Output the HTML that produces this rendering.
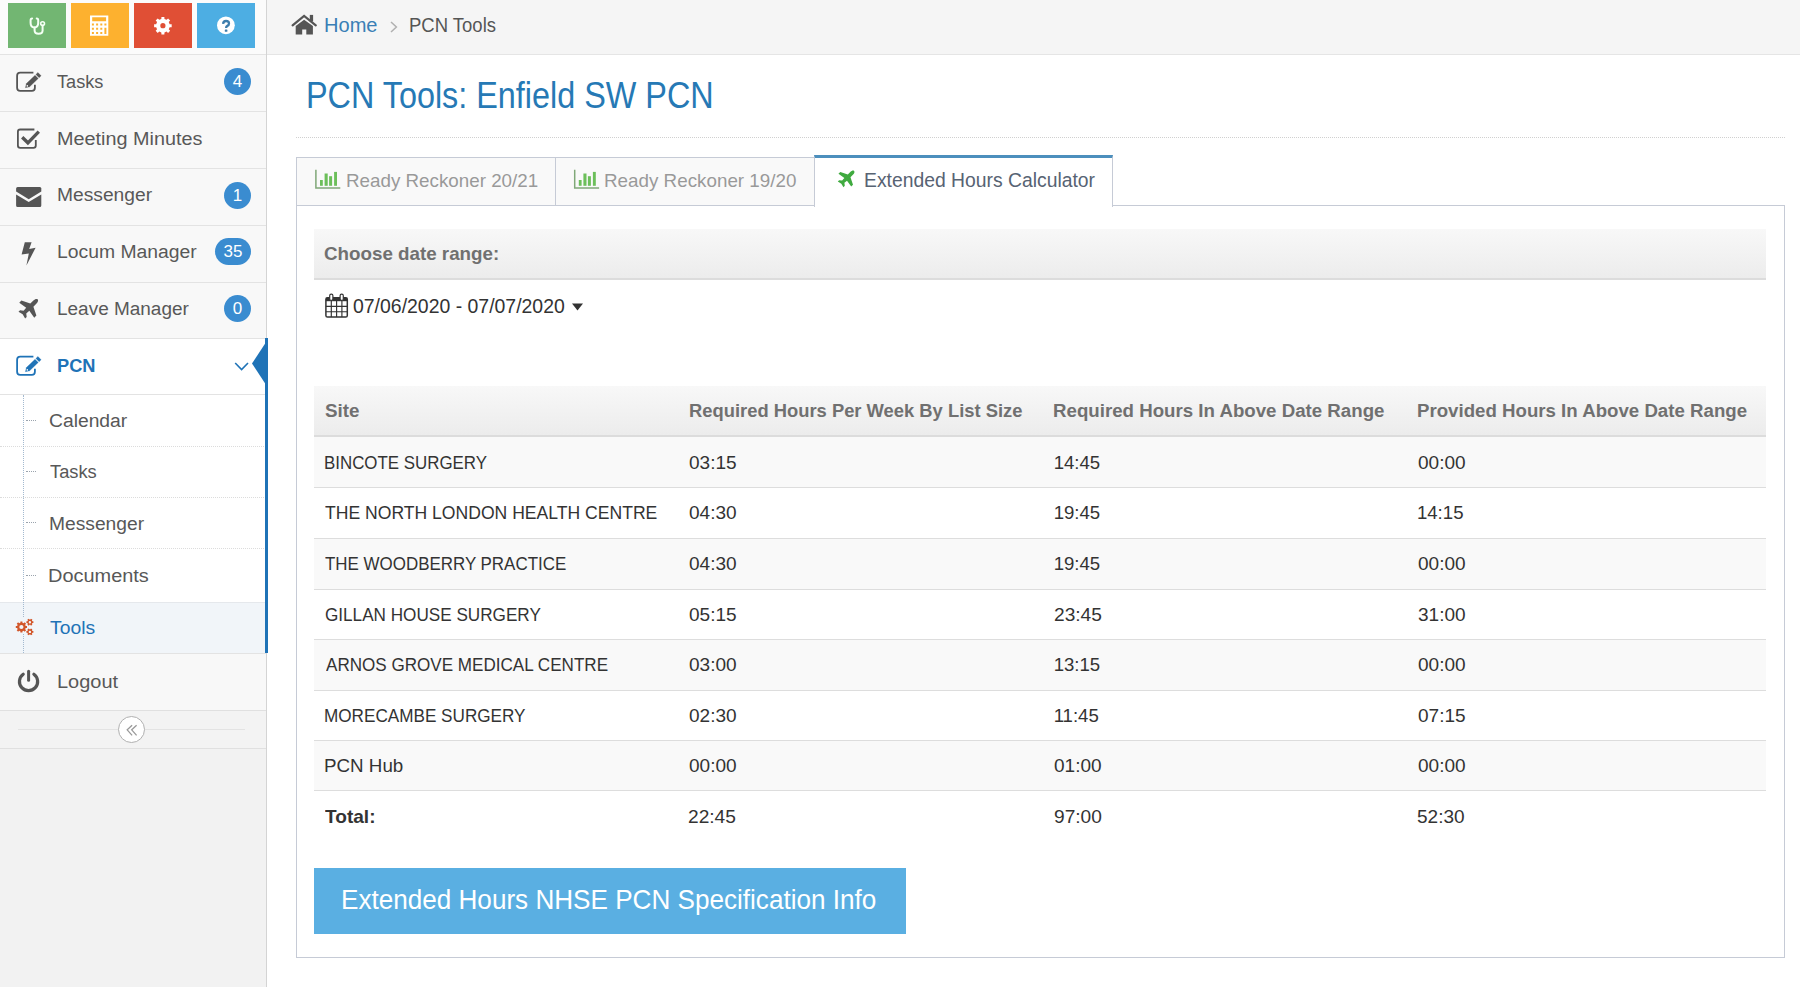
<!DOCTYPE html><html><head><meta charset='utf-8'><style>
*{box-sizing:border-box;margin:0;padding:0}
html,body{width:1800px;height:987px;overflow:hidden;background:#fff;font-family:"Liberation Sans",sans-serif;color:#393939}
.a{position:absolute;white-space:nowrap}
.t{position:absolute;white-space:nowrap;line-height:40px;transform-origin:0 50%}
svg{position:absolute;overflow:visible}
</style></head><body>
<div class='a' style='left:0;top:0;width:266px;height:987px;background:#f2f2f2'></div>
<div class='a' style='left:266px;top:0;width:1px;height:987px;background:#d4d4d4'></div>
<div class='a' style='left:0;top:0;width:266px;height:54px;background:#fbfbfb'></div>
<div class='a' style='left:8px;top:3px;width:58px;height:45px;background:#72b672'></div>
<div class='a' style='left:71px;top:3px;width:58px;height:45px;background:#fdb12f'></div>
<div class='a' style='left:134px;top:3px;width:58px;height:45px;background:#e04f35'></div>
<div class='a' style='left:197px;top:3px;width:58px;height:45px;background:#4daee3'></div>
<div class='a' style='left:0;top:54px;width:266px;height:57px;background:#f8f8f8;border-top:1px solid #e3e3e3'></div>
<div class='t' id='t0' style='left:57.30px;top:62.09px;font-size:18.8px;color:#585858;font-weight:400;letter-spacing:0px;transform:scaleX(0.9649);'>Tasks</div>
<div class='a' style='left:224px;top:67.5px;width:27px;height:27px;border-radius:14px;background:#3a8cd0;color:#fff;font-size:17px;line-height:27px;text-align:center'>4</div>
<div class='a' style='left:0;top:111px;width:266px;height:57px;background:#f8f8f8;border-top:1px solid #e3e3e3'></div>
<div class='t' id='t1' style='left:56.55px;top:118.59px;font-size:18.8px;color:#585858;font-weight:400;letter-spacing:0px;transform:scaleX(1.0550);'>Meeting Minutes</div>
<div class='a' style='left:0;top:168px;width:266px;height:57px;background:#f8f8f8;border-top:1px solid #e3e3e3'></div>
<div class='t' id='t2' style='left:57.05px;top:175.39px;font-size:18.8px;color:#585858;font-weight:400;letter-spacing:0px;transform:scaleX(1.0236);'>Messenger</div>
<div class='a' style='left:224px;top:181.5px;width:27px;height:27px;border-radius:14px;background:#3a8cd0;color:#fff;font-size:17px;line-height:27px;text-align:center'>1</div>
<div class='a' style='left:0;top:225px;width:266px;height:56.5px;background:#f8f8f8;border-top:1px solid #e3e3e3'></div>
<div class='t' id='t3' style='left:57.05px;top:232.19px;font-size:18.8px;color:#585858;font-weight:400;letter-spacing:0px;transform:scaleX(1.0295);'>Locum Manager</div>
<div class='a' style='left:215px;top:238.2px;width:36px;height:27px;border-radius:14px;background:#3a8cd0;color:#fff;font-size:17px;line-height:27px;text-align:center'>35</div>
<div class='a' style='left:0;top:281.5px;width:266px;height:56.5px;background:#f8f8f8;border-top:1px solid #e3e3e3'></div>
<div class='t' id='t4' style='left:57.05px;top:288.99px;font-size:18.8px;color:#585858;font-weight:400;letter-spacing:0px;transform:scaleX(1.0101);'>Leave Manager</div>
<div class='a' style='left:224px;top:294.8px;width:27px;height:27px;border-radius:14px;background:#3a8cd0;color:#fff;font-size:17px;line-height:27px;text-align:center'>0</div>
<div class='a' style='left:0;top:338px;width:266px;height:57px;background:#fff;border-top:1px solid #e3e3e3'></div>
<div class='t' id='t5' style='left:57.20px;top:345.56px;font-size:18.6px;color:#1f73b7;font-weight:700;letter-spacing:0px;transform:scaleX(0.9810);'>PCN</div>
<div class='a' style='left:0;top:394px;width:266px;height:208px;background:#fff;border-top:1px solid #e3e3e3'></div>
<div class='t' id='t6' style='left:49.40px;top:401.19px;font-size:18.8px;color:#585858;font-weight:400;letter-spacing:0px;transform:scaleX(1.0260);'>Calendar</div>
<div class='a' style='left:26px;top:420px;width:10px;height:0;border-top:1px dotted #9aa3ad'></div>
<div class='a' style='left:0;top:446px;width:266px;height:0;border-top:1px dotted #dcdcdc'></div>
<div class='t' id='t7' style='left:49.90px;top:452.49px;font-size:18.8px;color:#585858;font-weight:400;letter-spacing:0px;transform:scaleX(0.9734);'>Tasks</div>
<div class='a' style='left:26px;top:471px;width:10px;height:0;border-top:1px dotted #9aa3ad'></div>
<div class='a' style='left:0;top:497px;width:266px;height:0;border-top:1px dotted #dcdcdc'></div>
<div class='t' id='t8' style='left:48.65px;top:503.79px;font-size:18.8px;color:#585858;font-weight:400;letter-spacing:0px;transform:scaleX(1.0236);'>Messenger</div>
<div class='a' style='left:26px;top:522px;width:10px;height:0;border-top:1px dotted #9aa3ad'></div>
<div class='a' style='left:0;top:548px;width:266px;height:0;border-top:1px dotted #dcdcdc'></div>
<div class='t' id='t9' style='left:48.15px;top:556.19px;font-size:18.8px;color:#585858;font-weight:400;letter-spacing:0px;transform:scaleX(1.0615);'>Documents</div>
<div class='a' style='left:26px;top:575px;width:10px;height:0;border-top:1px dotted #9aa3ad'></div>
<div class='a' style='left:0;top:601.5px;width:266px;height:52px;background:#f1f5f9;border-top:1px solid #e5e8ec'></div>
<div class='t' id='t10' style='left:49.50px;top:608.19px;font-size:18.8px;color:#1f73b7;font-weight:400;letter-spacing:0px;transform:scaleX(1.0292);'>Tools</div>
<div class='a' style='left:23px;top:395px;width:0;height:258px;border-left:1px dotted #a3b9cf'></div>
<div class='a' style='left:265px;top:338px;width:3px;height:315px;background:#1f73b7'></div>
<div class='a' style='left:0;top:653px;width:266px;height:57px;background:#f8f8f8;border-top:1px solid #e3e3e3'></div>
<div class='t' id='t11' style='left:56.60px;top:662.19px;font-size:18.8px;color:#585858;font-weight:400;letter-spacing:0px;transform:scaleX(1.0637);'>Logout</div>
<div class='a' style='left:0;top:710px;width:266px;height:39px;background:#f3f3f3;border-top:1px solid #e0e0e0;border-bottom:1px solid #e0e0e0'></div>
<div class='a' style='left:18px;top:729px;width:227px;height:1px;background:#e3e3e3'></div>
<div class='a' style='left:117.5px;top:715.8px;width:27.6px;height:27.6px;border-radius:50%;background:#fff;border:1.4px solid #b0b0b0'></div>
<div class='a' style='left:267px;top:0;width:1533px;height:55px;background:#f5f5f5;border-bottom:1px solid #e5e5e5'></div>
<div class='t' id='t12' style='left:324.20px;top:6.11px;font-size:19.3px;color:#3a7fb6;font-weight:400;letter-spacing:0px;transform:scaleX(1.0400);'>Home</div>
<div class='t' id='t13' style='left:408.50px;top:6.11px;font-size:19.3px;color:#555;font-weight:400;letter-spacing:0px;transform:scaleX(0.9588);'>PCN Tools</div>
<div class='t' id='t14' style='left:305.95px;top:75.58px;font-size:37px;color:#2679b5;font-weight:400;letter-spacing:0px;transform:scaleX(0.8747);'>PCN Tools: Enfield SW PCN</div>
<div class='a' style='left:296px;top:137px;width:1489px;height:0;border-top:1px dotted #d0d0d0'></div>
<div class='a' style='left:296px;top:157px;width:260px;height:49px;background:#f9f9f9;border:1px solid #c6cbd6;border-bottom:none'></div>
<div class='a' style='left:555px;top:157px;width:260px;height:49px;background:#f9f9f9;border:1px solid #c6cbd6;border-bottom:none'></div>
<div class='t' id='t15' style='left:345.55px;top:160.92px;font-size:19px;color:#999;font-weight:400;letter-spacing:0px;transform:scaleX(0.9888);'>Ready Reckoner 20/21</div>
<div class='t' id='t16' style='left:604.45px;top:160.92px;font-size:19px;color:#999;font-weight:400;letter-spacing:0px;transform:scaleX(0.9901);'>Ready Reckoner 19/20</div>
<div class='a' style='left:296px;top:205px;width:1489px;height:753px;background:#fff;border:1px solid #c6cbd6'></div>
<div class='a' style='left:814px;top:155px;width:299px;height:52px;background:#fff;border:1px solid #c6cbd6;border-top:3px solid #4c8fbd;border-bottom:none'></div>
<div class='t' id='t17' style='left:863.50px;top:161.11px;font-size:19.3px;color:#576373;font-weight:400;letter-spacing:0px;transform:scaleX(1.0026);'>Extended Hours Calculator</div>
<div class='a' style='left:314px;top:229px;width:1452px;height:51px;background:linear-gradient(#f8f8f8,#ececec);border-bottom:2px solid #dcdcdc'></div>
<div class='t' id='t18' style='left:324.25px;top:233.72px;font-size:19px;color:#707070;font-weight:700;letter-spacing:0px;transform:scaleX(0.9880);'>Choose date range:</div>
<div class='t' id='t19' style='left:352.70px;top:286.51px;font-size:19.3px;color:#333;font-weight:400;letter-spacing:0px;transform:scaleX(1.0079);'>07/06/2020 - 07/07/2020</div>
<div class='a' style='left:314px;top:386px;width:1452px;height:51px;background:linear-gradient(#f8f8f8,#ececec);border-bottom:2px solid #dcdcdc'></div>
<div class='t' id='t20' style='left:325.00px;top:390.69px;font-size:18.8px;color:#707070;font-weight:700;letter-spacing:0px;'>Site</div>
<div class='t' id='t21' style='left:688.70px;top:390.69px;font-size:18.8px;color:#707070;font-weight:700;letter-spacing:0px;transform:scaleX(0.9780);'>Required Hours Per Week By List Size</div>
<div class='t' id='t22' style='left:1053.40px;top:390.69px;font-size:18.8px;color:#707070;font-weight:700;letter-spacing:0px;transform:scaleX(0.9946);'>Required Hours In Above Date Range</div>
<div class='t' id='t23' style='left:1417.20px;top:390.69px;font-size:18.8px;color:#707070;font-weight:700;letter-spacing:0px;transform:scaleX(0.9935);'>Provided Hours In Above Date Range</div>
<div class='a' style='left:314px;top:437.0px;width:1452px;height:51.0px;background:#f9f9f9;border-bottom:1px solid #ddd'></div>
<div class='t' id='t24' style='left:324.00px;top:442.76px;font-size:18.6px;color:#333;font-weight:400;letter-spacing:0px;transform:scaleX(0.9083);'>BINCOTE SURGERY</div>
<div class='t' id='t25' style='left:689.20px;top:442.76px;font-size:18.6px;color:#333;font-weight:400;letter-spacing:0px;transform:scaleX(1.0233);'>03:15</div>
<div class='t' id='t26' style='left:1053.65px;top:442.76px;font-size:18.6px;color:#333;font-weight:400;letter-spacing:0px;'>14:45</div>
<div class='t' id='t27' style='left:1417.70px;top:442.76px;font-size:18.6px;color:#333;font-weight:400;letter-spacing:0px;transform:scaleX(1.0233);'>00:00</div>
<div class='a' style='left:314px;top:488.0px;width:1452px;height:51.0px;background:#fff;border-bottom:1px solid #ddd'></div>
<div class='t' id='t28' style='left:325.00px;top:493.36px;font-size:18.6px;color:#333;font-weight:400;letter-spacing:0px;transform:scaleX(0.9452);'>THE NORTH LONDON HEALTH CENTRE</div>
<div class='t' id='t29' style='left:689.20px;top:493.36px;font-size:18.6px;color:#333;font-weight:400;letter-spacing:0px;transform:scaleX(1.0233);'>04:30</div>
<div class='t' id='t30' style='left:1053.65px;top:493.36px;font-size:18.6px;color:#333;font-weight:400;letter-spacing:0px;'>19:45</div>
<div class='t' id='t31' style='left:1416.95px;top:493.36px;font-size:18.6px;color:#333;font-weight:400;letter-spacing:0px;'>14:15</div>
<div class='a' style='left:314px;top:539.0px;width:1452px;height:51.0px;background:#f9f9f9;border-bottom:1px solid #ddd'></div>
<div class='t' id='t32' style='left:325.00px;top:543.96px;font-size:18.6px;color:#333;font-weight:400;letter-spacing:0px;transform:scaleX(0.9108);'>THE WOODBERRY PRACTICE</div>
<div class='t' id='t33' style='left:689.20px;top:543.96px;font-size:18.6px;color:#333;font-weight:400;letter-spacing:0px;transform:scaleX(1.0233);'>04:30</div>
<div class='t' id='t34' style='left:1053.65px;top:543.96px;font-size:18.6px;color:#333;font-weight:400;letter-spacing:0px;'>19:45</div>
<div class='t' id='t35' style='left:1417.70px;top:543.96px;font-size:18.6px;color:#333;font-weight:400;letter-spacing:0px;transform:scaleX(1.0233);'>00:00</div>
<div class='a' style='left:314px;top:590.0px;width:1452px;height:50.0px;background:#fff;border-bottom:1px solid #ddd'></div>
<div class='t' id='t36' style='left:325.00px;top:594.56px;font-size:18.6px;color:#333;font-weight:400;letter-spacing:0px;transform:scaleX(0.9216);'>GILLAN HOUSE SURGERY</div>
<div class='t' id='t37' style='left:689.20px;top:594.56px;font-size:18.6px;color:#333;font-weight:400;letter-spacing:0px;transform:scaleX(1.0233);'>05:15</div>
<div class='t' id='t38' style='left:1054.40px;top:594.56px;font-size:18.6px;color:#333;font-weight:400;letter-spacing:0px;transform:scaleX(1.0291);'>23:45</div>
<div class='t' id='t39' style='left:1417.70px;top:594.56px;font-size:18.6px;color:#333;font-weight:400;letter-spacing:0px;transform:scaleX(1.0233);'>31:00</div>
<div class='a' style='left:314px;top:640.0px;width:1452px;height:51.0px;background:#f9f9f9;border-bottom:1px solid #ddd'></div>
<div class='t' id='t40' style='left:325.50px;top:645.16px;font-size:18.6px;color:#333;font-weight:400;letter-spacing:0px;transform:scaleX(0.9181);'>ARNOS GROVE MEDICAL CENTRE</div>
<div class='t' id='t41' style='left:689.20px;top:645.16px;font-size:18.6px;color:#333;font-weight:400;letter-spacing:0px;transform:scaleX(1.0233);'>03:00</div>
<div class='t' id='t42' style='left:1053.65px;top:645.16px;font-size:18.6px;color:#333;font-weight:400;letter-spacing:0px;'>13:15</div>
<div class='t' id='t43' style='left:1417.70px;top:645.16px;font-size:18.6px;color:#333;font-weight:400;letter-spacing:0px;transform:scaleX(1.0233);'>00:00</div>
<div class='a' style='left:314px;top:691.0px;width:1452px;height:50.0px;background:#fff;border-bottom:1px solid #ddd'></div>
<div class='t' id='t44' style='left:324.00px;top:695.76px;font-size:18.6px;color:#333;font-weight:400;letter-spacing:0px;transform:scaleX(0.9216);'>MORECAMBE SURGERY</div>
<div class='t' id='t45' style='left:689.20px;top:695.76px;font-size:18.6px;color:#333;font-weight:400;letter-spacing:0px;transform:scaleX(1.0233);'>02:30</div>
<div class='t' id='t46' style='left:1053.65px;top:695.76px;font-size:18.6px;color:#333;font-weight:400;letter-spacing:0px;'>11:45</div>
<div class='t' id='t47' style='left:1417.70px;top:695.76px;font-size:18.6px;color:#333;font-weight:400;letter-spacing:0px;transform:scaleX(1.0233);'>07:15</div>
<div class='a' style='left:314px;top:741.0px;width:1452px;height:50.0px;background:#f9f9f9;border-bottom:1px solid #ddd'></div>
<div class='t' id='t48' style='left:324.00px;top:746.36px;font-size:18.6px;color:#333;font-weight:400;letter-spacing:0px;transform:scaleX(1.0092);'>PCN Hub</div>
<div class='t' id='t49' style='left:689.20px;top:746.36px;font-size:18.6px;color:#333;font-weight:400;letter-spacing:0px;transform:scaleX(1.0233);'>00:00</div>
<div class='t' id='t50' style='left:1054.15px;top:746.36px;font-size:18.6px;color:#333;font-weight:400;letter-spacing:0px;transform:scaleX(1.0232);'>01:00</div>
<div class='t' id='t51' style='left:1417.70px;top:746.36px;font-size:18.6px;color:#333;font-weight:400;letter-spacing:0px;transform:scaleX(1.0233);'>00:00</div>
<div class='t' id='t52' style='left:324.75px;top:796.96px;font-size:18.6px;color:#333;font-weight:700;letter-spacing:0px;transform:scaleX(1.0265);'>Total:</div>
<div class='t' id='t53' style='left:688.45px;top:796.96px;font-size:18.6px;color:#333;font-weight:400;letter-spacing:0px;transform:scaleX(1.0291);'>22:45</div>
<div class='t' id='t54' style='left:1054.40px;top:796.96px;font-size:18.6px;color:#333;font-weight:400;letter-spacing:0px;transform:scaleX(1.0289);'>97:00</div>
<div class='t' id='t55' style='left:1417.45px;top:796.96px;font-size:18.6px;color:#333;font-weight:400;letter-spacing:0px;transform:scaleX(1.0235);'>52:30</div>
<div class='a' style='left:314px;top:868px;width:592px;height:66px;background:#5aafe2'></div>
<div class='t' id='t56' style='left:341.25px;top:880.47px;font-size:27.5px;color:#fff;font-weight:400;letter-spacing:0px;transform:scaleX(0.9490);'>Extended Hours NHSE PCN Specification Info</div>
<svg width='1800' height='987' viewBox='0 0 1800 987' style='left:0;top:0;position:absolute'><g fill='none' stroke='#f4fff4' stroke-width='2' stroke-linecap='round'><path d='M32.1,18.5 Q30.6,18.5 30.6,20.2 L30.6,23 Q30.6,27.4 34.4,27.4 Q38.2,27.4 38.2,23 L38.2,20.2 Q38.2,18.5 36.7,18.5'/><path d='M34.6,27.4 L34.6,30.6 Q34.6,33.8 38.6,33.8 Q42.6,33.8 42.6,30.6 L42.6,25.6'/><circle cx='42.6' cy='23.6' r='1.9' stroke-width='1.6'/></g><path fill='#fff' fill-rule='evenodd' d='M90,15.5 h18.3 v20.3 h-18.3Z M92.2,17.2 h13.9 v4.1 h-13.9Z M91.9,23.6 h2 v2 h-2Z M96.1,23.6 h2 v2 h-2Z M100.3,23.6 h2 v2 h-2Z M104.4,23.6 h2 v2 h-2Z M91.9,27.8 h2 v2 h-2Z M96.1,27.8 h2 v2 h-2Z M100.3,27.8 h2 v2 h-2Z M91.9,31.9 h2 v2 h-2Z M96.1,31.9 h2 v2 h-2Z M100.3,31.9 h2 v2 h-2Z M104.4,27.8 h2 v6.1 h-2Z'/><path fill='#fff' fill-rule='evenodd' d='M169.62,24.14 L171.68,24.24 L171.68,27.16 L169.62,27.26 L168.75,29.35 L170.14,30.87 L168.07,32.94 L166.55,31.55 L164.46,32.42 L164.36,34.48 L161.44,34.48 L161.34,32.42 L159.25,31.55 L157.73,32.94 L155.66,30.87 L157.05,29.35 L156.18,27.26 L154.12,27.16 L154.12,24.24 L156.18,24.14 L157.05,22.05 L155.66,20.53 L157.73,18.46 L159.25,19.85 L161.34,18.98 L161.44,16.92 L164.36,16.92 L164.46,18.98 L166.55,19.85 L168.07,18.46 L170.14,20.53 L168.75,22.05Z M160.30,25.70 a2.6,2.6 0 1,0 5.2,0 a2.6,2.6 0 1,0 -5.2,0Z'/><circle cx='225.9' cy='25.3' r='8.9' fill='#fff'/><path d='M223.1,23.8 Q223.3,21 226,21 Q229,21 229,23.5 Q229,25.1 227.3,25.9 Q226.1,26.5 226.1,28' fill='none' stroke='#3d7dac' stroke-width='2.3'/><rect x='224.8' y='29.4' width='2.6' height='2.4' rx='0.6' fill='#3d7dac'/><g transform='translate(0,0)'><path d='M33.4,72.6 H20.2 Q17.1,72.6 17.1,75.7 V87.8 Q17.1,90.9 20.2,90.9 H31.8 Q34.9,90.9 34.9,87.8 V84.8' fill='none' stroke='#555' stroke-width='1.8'/><path d='M25.40,87.70 L29.59,86.86 L26.40,83.55Z M29.59,86.86 L38.23,78.53 L35.04,75.22 L26.40,83.55Z M39.09,77.70 L41.11,75.75 L37.92,72.44 L35.90,74.38Z' fill='#555' stroke='#555' stroke-width='0.3' stroke-linejoin='round'/><circle cx='27.27' cy='85.90' r='0.8' fill='#fff'/></g><path d='M34.4,129.5 H20.2 Q17.9,129.5 17.9,131.8 V145.5 Q17.9,147.8 20.2,147.8 H33.5 Q35.8,147.8 35.8,145.5 V139.9' fill='none' stroke='#555' stroke-width='1.8'/><path d='M22.2,137.2 L27.9,142.8 L38.8,131.6' fill='none' stroke='#555' stroke-width='3.3' stroke-linejoin='miter'/><path d='M17.6,187.1 H39.8 Q41.3,187.1 41.3,188.6 V191.6 L28.7,199.2 L16.1,191.6 V188.6 Q16.1,187.1 17.6,187.1Z' fill='#555'/><path d='M16.1,194.4 L28.7,202 L41.3,194.4 V205.5 Q41.3,207 39.8,207 H17.6 Q16.1,207 16.1,205.5Z' fill='#555'/><path d='M24.8,242.3 L31.6,242.3 L29.2,248.9 L35.6,247.8 L26.4,265.6 L28.8,253.6 L21.6,254.6Z' fill='#555'/><path d='M0,-12.8 C1.5,-12.8 2.2,-10.8 2.2,-9 L2.2,-4.6 L10.6,-0.4 L10.6,2.6 L2.2,1.2 L1.9,5.2 L4.7,7.4 L4.7,9.6 L0,8.4 L-4.7,9.6 L-4.7,7.4 L-1.9,5.2 L-2.2,1.2 L-10.6,2.6 L-10.6,-0.4 L-2.2,-4.6 L-2.2,-9 C-2.2,-10.8 -1.5,-12.8 0,-12.8Z' fill='#555' transform='translate(28.6,308.4) rotate(45) scale(1.0)'/><g transform='translate(0,284)'><path d='M33.4,72.6 H20.2 Q17.1,72.6 17.1,75.7 V87.8 Q17.1,90.9 20.2,90.9 H31.8 Q34.9,90.9 34.9,87.8 V84.8' fill='none' stroke='#1f73b7' stroke-width='1.8'/><path d='M25.40,87.70 L29.59,86.86 L26.40,83.55Z M29.59,86.86 L38.23,78.53 L35.04,75.22 L26.40,83.55Z M39.09,77.70 L41.11,75.75 L37.92,72.44 L35.90,74.38Z' fill='#1f73b7' stroke='#1f73b7' stroke-width='0.3' stroke-linejoin='round'/><circle cx='27.27' cy='85.90' r='0.8' fill='#fff'/></g><path d='M235.2,363 L241.6,369.6 L248,363' fill='none' stroke='#1f73b7' stroke-width='1.6'/><path d='M265.5,343 L252,363.5 L265.5,384Z' fill='#1f73b7'/><rect x='15' y='617' width='20' height='17' fill='#f1f5f9'/><path fill='#d2572b' fill-rule='evenodd' d='M25.67,625.96 L27.01,626.00 L27.01,628.00 L25.67,628.04 L25.16,629.28 L26.08,630.26 L24.66,631.68 L23.68,630.76 L22.44,631.27 L22.40,632.61 L20.40,632.61 L20.36,631.27 L19.12,630.76 L18.14,631.68 L16.72,630.26 L17.64,629.28 L17.13,628.04 L15.79,628.00 L15.79,626.00 L17.13,625.96 L17.64,624.72 L16.72,623.74 L18.14,622.32 L19.12,623.24 L20.36,622.73 L20.40,621.39 L22.40,621.39 L22.44,622.73 L23.68,623.24 L24.66,622.32 L26.08,623.74 L25.16,624.72Z M19.30,627.00 a2.1,2.1 0 1,0 4.2,0 a2.1,2.1 0 1,0 -4.2,0Z'/><path fill='#d2572b' fill-rule='evenodd' d='M32.46,621.35 L33.40,621.36 L33.40,623.04 L32.46,623.05 L31.92,624.00 L32.38,624.81 L30.92,625.65 L30.45,624.84 L29.35,624.84 L28.88,625.65 L27.42,624.81 L27.88,624.00 L27.34,623.05 L26.40,623.04 L26.40,621.36 L27.34,621.35 L27.88,620.40 L27.42,619.59 L28.88,618.75 L29.35,619.56 L30.45,619.56 L30.92,618.75 L32.38,619.59 L31.92,620.40Z M28.70,622.20 a1.2,1.2 0 1,0 2.4,0 a1.2,1.2 0 1,0 -2.4,0Z'/><path fill='#d2572b' fill-rule='evenodd' d='M32.46,631.05 L33.40,631.06 L33.40,632.74 L32.46,632.75 L31.92,633.70 L32.38,634.51 L30.92,635.35 L30.45,634.54 L29.35,634.54 L28.88,635.35 L27.42,634.51 L27.88,633.70 L27.34,632.75 L26.40,632.74 L26.40,631.06 L27.34,631.05 L27.88,630.10 L27.42,629.29 L28.88,628.45 L29.35,629.26 L30.45,629.26 L30.92,628.45 L32.38,629.29 L31.92,630.10Z M28.70,631.90 a1.2,1.2 0 1,0 2.4,0 a1.2,1.2 0 1,0 -2.4,0Z'/><path d='M23.2,674.2 A9.1,9.1 0 1,0 33.9,674.2' fill='none' stroke='#555' stroke-width='3.2' stroke-linecap='round'/><path d='M28.6,671.3 V680.3' stroke='#555' stroke-width='3' stroke-linecap='round'/><path d='M132.1,725.2 L127.2,729.9 L132.1,735.4 M136.6,725.2 L131.7,729.9 L136.6,735.4' fill='none' stroke='#999' stroke-width='1.3'/><path d='M292.6,25.3 L304.1,15.9 L315.8,25.3' fill='none' stroke='#555' stroke-width='2.2' stroke-linecap='round'/><rect x='309.8' y='14.9' width='3.3' height='6.5' fill='#555'/><path d='M295.7,26 L304.1,19.7 L312.9,26 V34.6 H306.3 V29.4 H302.2 V34.6 H295.7Z' fill='#555'/><path d='M391,22 L396.4,27 L391,32' fill='none' stroke='#b0b0b0' stroke-width='1.5'/><g transform='translate(0,0)'><path d='M315.9,169.7 V188.1 H340.3' fill='none' stroke='#80a878' stroke-width='1.5'/><rect x='320' y='180' width='2.8' height='5.8' fill='#6cbf5a'/><rect x='324.6' y='173.5' width='3.1' height='12.3' fill='#6cbf5a'/><rect x='329.1' y='176.2' width='3' height='9.6' fill='#6cbf5a'/><rect x='334.1' y='171.9' width='2.9' height='13.9' fill='#6cbf5a'/></g><g transform='translate(258.8,0)'><path d='M315.9,169.7 V188.1 H340.3' fill='none' stroke='#80a878' stroke-width='1.5'/><rect x='320' y='180' width='2.8' height='5.8' fill='#6cbf5a'/><rect x='324.6' y='173.5' width='3.1' height='12.3' fill='#6cbf5a'/><rect x='329.1' y='176.2' width='3' height='9.6' fill='#6cbf5a'/><rect x='334.1' y='171.9' width='2.9' height='13.9' fill='#6cbf5a'/></g><path d='M0,-12.8 C1.5,-12.8 2.2,-10.8 2.2,-9 L2.2,-4.6 L10.6,-0.4 L10.6,2.6 L2.2,1.2 L1.9,5.2 L4.7,7.4 L4.7,9.6 L0,8.4 L-4.7,9.6 L-4.7,7.4 L-1.9,5.2 L-2.2,1.2 L-10.6,2.6 L-10.6,-0.4 L-2.2,-4.6 L-2.2,-9 C-2.2,-10.8 -1.5,-12.8 0,-12.8Z' fill='#3faa3f' transform='translate(846.4,178.6) rotate(45) scale(0.85)'/><rect x='325.9' y='297.8' width='21.4' height='19.3' rx='1.6' fill='none' stroke='#333' stroke-width='1.5'/><rect x='325.9' y='297.8' width='21.4' height='3.4' fill='#333'/><path d='M331.3,301 V317 M336.6,301 V317 M341.9,301 V317 M325.9,306.3 H347.3 M325.9,311.7 H347.3' stroke='#333' stroke-width='1.15'/><rect x='329.7' y='294.2' width='3.2' height='6.2' rx='1.5' fill='#fff' stroke='#333' stroke-width='1.2'/><rect x='340.1' y='294.2' width='3.2' height='6.2' rx='1.5' fill='#fff' stroke='#333' stroke-width='1.2'/><path d='M572,303.5 L583,303.5 L577.5,310.5Z' fill='#333'/></svg>
</body></html>
